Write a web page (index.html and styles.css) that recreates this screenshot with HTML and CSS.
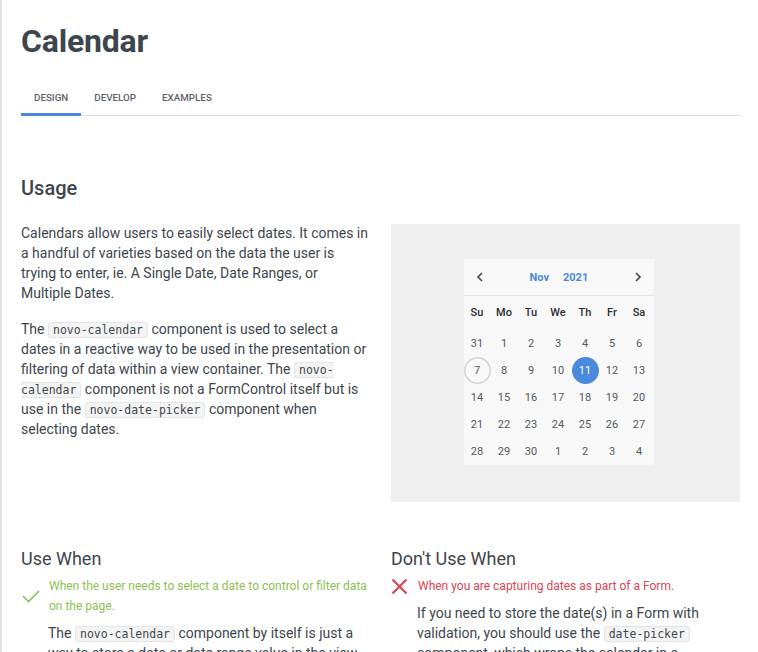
FILE: index.html
```html
<!DOCTYPE html>
<html>
<head>
<meta charset="utf-8">
<link rel="stylesheet" href="styles.css">
</head>
<body>
<main class="page">
  <h1 class="title">Calendar</h1>
  <nav class="tabs">
    <span class="tab active">Design</span>
    <span class="tab">Develop</span>
    <span class="tab">Examples</span>
  </nav>

  <h2 class="section-title">Usage</h2>
  <div class="cols">
    <div class="text">
      <p>Calendars allow users to easily select dates. It comes in a handful of varieties based on the data the user is trying to enter, ie. A Single Date, Date Ranges, or Multiple Dates.</p>
      <p>The <code>novo-calendar</code> component is used to select a dates in a reactive way to be used in the presentation or filtering of data within a view container. The <code>novo-calendar</code> component is not a FormControl itself but is use in the <code>novo-date-picker</code> component when selecting dates.</p>
    </div>
    <div class="demo">
      <div class="cal">
        <div class="cal-head">
          <span class="chev">
            <svg width="8" height="10" viewBox="0 0 8 10"><path d="M6 1 L2 5 L6 9" fill="none" stroke="#3d464d" stroke-width="1.6"/></svg>
          </span>
          <span class="month">Nov</span>
          <span class="year">2021</span>
          <span class="chev">
            <svg width="8" height="10" viewBox="0 0 8 10"><path d="M2 1 L6 5 L2 9" fill="none" stroke="#3d464d" stroke-width="1.6"/></svg>
          </span>
        </div>
        <div class="grid wk">
          <span>Su</span><span>Mo</span><span>Tu</span><span>We</span><span>Th</span><span>Fr</span><span>Sa</span>
        </div>
        <div class="grid days">
          <span>31</span><span>1</span><span>2</span><span>3</span><span>4</span><span>5</span><span>6</span>
          <span class="today">7</span><span>8</span><span>9</span><span>10</span><span class="sel">11</span><span>12</span><span>13</span>
          <span>14</span><span>15</span><span>16</span><span>17</span><span>18</span><span>19</span><span>20</span>
          <span>21</span><span>22</span><span>23</span><span>24</span><span>25</span><span>26</span><span>27</span>
          <span>28</span><span>29</span><span>30</span><span>1</span><span>2</span><span>3</span><span>4</span>
        </div>
      </div>
    </div>
  </div>

  <div class="cols whens">
    <div>
      <h3 class="sub">Use When</h3>
      <div class="rule do">
        <svg class="ico" width="18" height="14" viewBox="0 0 18 14"><path d="M1 7 L6.5 12.5 L17 2" fill="none" stroke="#8cc152" stroke-width="1.6"/></svg>
        <span>When the user needs to select a date to control or filter data on the page.</span>
      </div>
      <p class="body">The <code>novo-calendar</code> component by itself is just a way to store a date or date range value in the view</p>
    </div>
    <div>
      <h3 class="sub">Don't Use When</h3>
      <div class="rule dont">
        <svg class="ico" width="17" height="17" viewBox="0 0 17 17"><path d="M1.5 1.5 L15.5 15.5 M15.5 1.5 L1.5 15.5" fill="none" stroke="#da4453" stroke-width="2.2"/></svg>
        <span>When you are capturing dates as part of a Form.</span>
      </div>
      <p class="body">If you need to store the date(s) in a Form with validation, you should use the <code>date-picker</code> component, which wraps the calendar in a</p>
    </div>
  </div>
</main>
</body>
</html>
```
FILE: styles.css
```css
* { box-sizing: border-box; }
html, body { margin: 0; padding: 0; background: #fff; }
body {
  font-family: Roboto, "Liberation Sans", sans-serif;
  color: #3d464d;
  height: 652px;
  overflow: hidden;
}
.page {
  border-left: 2px solid #e2e2e2;
  padding: 0 18px 0 19px;
  min-height: 652px;
}
.title {
  margin: 0;
  padding-top: 22px;
  font-size: 32px;
  line-height: 38px;
  font-weight: 700;
  color: #3d464d;
  letter-spacing: -0.2px;
}
.tabs {
  display: flex;
  margin-top: 26px;
  border-bottom: 1px solid #dcdcdc;
}
.tab {
  padding: 5px 13px 9px;
  font-size: 9.8px;
  line-height: 13px;
  font-weight: 500;
  text-transform: uppercase;
  color: #5f6468;
  border-bottom: 3px solid transparent;
  margin-bottom: -1px;
}
.tab.active { border-bottom-color: #4a89dc; }
.section-title {
  margin: 60px 0 0;
  font-size: 20px;
  line-height: 24px;
  font-weight: 500;
  color: #3d464d;
}
.cols {
  display: grid;
  grid-template-columns: 349px 349px;
  column-gap: 21px;
}
.text { padding-top: 23px; }
.text p, .body {
  margin: 0 0 16px;
  font-size: 14px;
  line-height: 20px;
  color: #3d464d;
}
code {
  font-family: "DejaVu Sans Mono", "Liberation Mono", monospace;
  font-size: 11.5px;
  line-height: 14px;
  background: #f4f4f4;
  border: 1px solid #e4e4e4;
  border-radius: 3px;
  padding: 0 4px;
}
.demo {
  margin-top: 24px;
  height: 278px;
  background: #efefef;
  display: flex;
  justify-content: center;
  padding-top: 35px;
  padding-right: 14px;
}
.cal {
  width: 190px;
  height: 206px;
  background: #f8f8f8;
}
.cal-head {
  height: 37px;
  display: flex;
  align-items: center;
  border-bottom: 1px solid #e6e6e6;
  font-size: 11px;
  font-weight: 700;
}
.chev { width: 30px; display: flex; justify-content: center; padding-left: 2px; }
.cal-head .chev:first-child { margin-right: 36px; }
.cal-head .chev:last-child { margin-left: auto; padding-left: 0; padding-right: 0; width: 32px; }
.month { color: #4a89dc; }
.year { color: #4a89dc; margin-left: 14px; }
.grid {
  display: grid;
  grid-template-columns: repeat(7, 27px);
  text-align: center;
  font-size: 11px;
}
.wk span {
  height: 34px;
  line-height: 34px;
  color: #2b3034;
  font-weight: 500;
}
.days span {
  height: 27px;
  line-height: 27px;
  color: #555a5e;
  border-radius: 50%;
}
.days .today { box-shadow: inset 0 0 0 1.5px #d4d4d4; }
.days .sel { background: #4a89dc; color: #fff; }
.whens { margin-top: 45px; }
.sub {
  margin: 0 0 5px;
  font-size: 18px;
  line-height: 24px;
  font-weight: 400;
  color: #3d464d;
}
.rule {
  display: flex;
  align-items: center;
  font-size: 12px;
  line-height: 20px;
}
.rule .ico { flex: none; }
.rule.do { gap: 9px; color: #8cc152; }
.rule.do .ico { margin-left: 1px; }
.rule.dont { gap: 10px; color: #da4453; }
.body { margin: 7px 0 0 27px; }
.dont + .body { margin-left: 26px; }
```
